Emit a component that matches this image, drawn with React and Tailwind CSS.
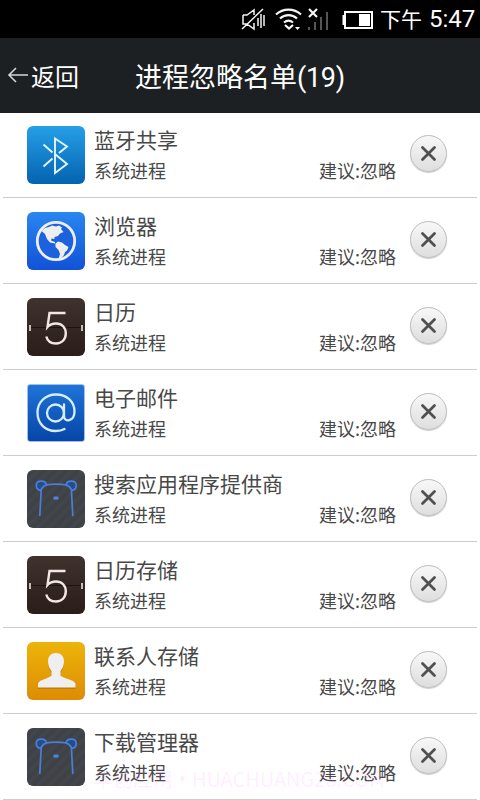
import React from 'react';

const rows = [
  ['蓝牙共享', 'bluetooth'],
  ['浏览器', 'globe'],
  ['日历', 'calendar'],
  ['电子邮件', 'mail'],
  ['搜索应用程序提供商', 'bear'],
  ['日历存储', 'calendar'],
  ['联系人存储', 'contact'],
  ['下载管理器', 'bear'],
];

const tiles = {
  bluetooth: 'rounded-[6px] bg-linear-to-b from-[#25a0e8] to-[#0563b0]',
  globe: 'rounded-[6px] bg-linear-to-b from-[#2a86f0] to-[#1451d8]',
  calendar: 'rounded-[6px] bg-linear-to-b from-[#40322d] to-[#2a1d1a]',
  mail: 'rounded-[3px] border border-[#9fc0ea] bg-linear-to-b from-[#1f74d8] to-[#0845a8]',
  bear: 'rounded-[6px] bg-[repeating-linear-gradient(135deg,#43474c_0px,#3e4247_4px,#3e4247_5px,#43474c_8px)]',
  contact: 'rounded-[6px] bg-linear-to-b from-[#ecb40a] to-[#dd8c04]',
};

const PERSON =
  'M29 11C24 11 21 14.500 21 19C21 23 22 26 24.500 29V33.500C21 37 13 37 11 41.500V45.500H48.500V41.500C46 37 37 37 33.500 33.500V29C36 26 37 23 37 19C37 14.500 34 11 29 11Z';

function Glyph({ kind }) {
  switch (kind) {
    case 'bluetooth':
      return (
        <g fill="none" stroke="#e4f5ff" strokeWidth="1.9">
          <path d="M16.5 18.5 25.5 26.5M16.5 40.5 25.5 32.5M32 27 40 20.5 28 12.5V47L40 38 28.5 28.5" />
        </g>
      );
    case 'globe':
      return (
        <>
          <circle cx="29" cy="29" r="18.7" fill="#1c62df" stroke="#eeeeee" strokeWidth="2.8" />
          <path fill="#eeeeee" d="M14.500 19 18 16 22 15 25 13.500 29 14.500 32 13.500 35 15.500 34 17 36.500 20 33 21.500 31 24 27.500 25 27.500 27 24.500 26.500 24 28.500 28 30 28 31.500 23 30.500 20 27 18 22Z" />
          <path fill="#eeeeee" d="M28.500 31.500 31 29.500 35 30.500 38 33 41.500 35 40 38.500 38 40 37 43 33.500 47 31.500 47 33 42 31.500 38 28.500 35Z" />
        </>
      );
    case 'calendar':
      return (
        <>
          <path d="M3 29.500H55" stroke="#1d1310" strokeWidth="1" />
          <path d="M3 27V33M55 27V33" stroke="#d8cdc8" strokeWidth="1.8" />
          <path d="M38.500 15H22.500L20.500 29C23 26.300 26 25.500 29 25.500C35 25.500 38.800 29.500 38.800 35.300C38.800 41.500 34.800 45.500 29 45.500C23.500 45.500 20.300 42.500 19.300 38.500" fill="none" stroke="#f1e7e4" strokeWidth="2.4" />
        </>
      );
    case 'mail':
      return (
        <g fill="none" stroke="#d6ecff" strokeWidth="2.3" strokeLinecap="round" transform="translate(-1 -1)">
          <circle cx="28.500" cy="29" r="8.500" />
          <path d="M37 20.500V32C37 39 47.500 37.500 47.500 27.500C47.500 17 39.500 10.500 29 10.500C18 10.500 10.500 18.500 10.500 28.500C10.500 39.500 18 47 28.500 47C32 47 35 46.500 37.500 45" />
        </g>
      );
    case 'bear':
      return (
        <g fill="none" stroke="#4a7fd8" strokeWidth="1.7" strokeLinecap="round">
          <path d="M12.800 45.500 14.200 20M45.800 45.500 44.400 20M18.500 15C25 13.900 33 13.900 40 15" />
          <path fill="#254d8c" d="M13.500 20.500C7.500 19 8 11 14.200 11.200C17.500 11.300 19.300 13 19.300 15.200C16.500 15.500 15.500 17.500 13.500 20.500ZM45 20.500C51 19 50.500 11 44.300 11.200C41 11.300 39.200 13 39.200 15.200C42 15.500 43 17.500 45 20.500Z" />
          <ellipse cx="29" cy="28" rx="2" ry="1" fill="#8ab4f0" />
        </g>
      );
    default:
      return (
        <>
          <path d={PERSON} fill="#a86803" opacity=".55" transform="translate(0 1.500)" />
          <path d={PERSON} fill="#efefef" />
        </>
      );
  }
}

function StatusBar() {
  return (
    <div className="flex h-[38px] items-center bg-black pl-[240px] text-white">
      <svg width="137" height="38" viewBox="240 0 137 38" className="shrink-0">
        <g fill="none" stroke="#f4f4f4" strokeWidth="1.5">
          <path d="M243 15V24H247L254 29V23M243 15H247L254 10V15M242 29 263 9M258 18V26M261 14V28M264 15V26" />
          <path strokeWidth="2.2" d="M276 14.500C283 8 294 8 301 14.500M280 18.500C285 14 292 14 297 18.500M284 22.500C287 20 290 20 293 22.500" />
          <path strokeWidth="2.2" d="M309 9 317 17M317 9 309 17" />
        </g>
        <path d="M285 25 289 28.500 293 25" fill="none" stroke="#fff" strokeWidth="2.2" />
        <path d="M295 27H300L297.500 30Z" fill="#fff" />
        <path d="M309 27V30M315 22V30M321 17V30M327 12V30" stroke="#555" strokeWidth="2" />
        <path d="M345 12H372V28H345ZM345 16H343.500V24H345" fill="none" stroke="#fff" strokeWidth="2" />
        <path d="M359 14H370V26H359Z" fill="#fff" />
      </svg>
      <span className="ml-[3px] whitespace-nowrap pb-px text-[21px] leading-[37px]">下午</span>
      <span className="ml-[7px] whitespace-nowrap font-[Roboto] text-[24px] leading-[38px]">5:47</span>
    </div>
  );
}

function Row({ title, kind }) {
  return (
    <li className="mx-[3px] flex h-[86px] shrink-0 border-b border-[#cdcdcd] pl-6">
      <div className={`mt-[14px] size-[58px] shrink-0 overflow-hidden ${tiles[kind]}`}>
        <svg width="58" height="58" viewBox="0 0 58 58">
          <Glyph kind={kind} />
        </svg>
      </div>
      <div className="ml-[9px] mt-[12px] w-[225px] whitespace-nowrap text-[#484848]">
        <div className="text-[21px] leading-[30px]">{title}</div>
        <div className="mt-px text-[18px] leading-[30px]">系统进程</div>
      </div>
      <div className="mt-[43px] w-[77px] whitespace-nowrap text-[18px] leading-[30px] text-[#484848]">建议:忽略</div>
      <button className="ml-[14px] mt-[23px] flex size-[37px] items-center justify-center rounded-full border border-[#bcbcbc] bg-linear-to-b from-[#f8f8f8] to-[#dedede] shadow-[0_1px_1px_#ccc]">
        <svg width="17" height="17" viewBox="0 0 17 17">
          <path d="M2.500 2.500 14.500 14.500M14.500 2.500 2.500 14.500" stroke="#505050" strokeWidth="2.8" strokeLinecap="round" />
        </svg>
      </button>
    </li>
  );
}

export default function App() {
  return (
    <div className="relative flex h-[800px] w-[480px] flex-col overflow-hidden bg-white font-['Noto_Sans_CJK_SC',sans-serif]">
      <StatusBar />
      <header className="flex h-[75px] shrink-0 items-center bg-[#1d2022] text-white">
        <svg width="22" height="20" viewBox="0 0 22 20" className="ml-[7px]">
          <path d="M21 9H2M9 2 2 9 9 16" fill="none" stroke="#d5d5d5" strokeWidth="1.6" />
        </svg>
        <span className="ml-[2px] w-[104px] text-[24px]">返回</span>
        <h1 className="whitespace-nowrap pt-[3px] text-[27px]">
          进程忽略名单<span className="font-[Roboto] tracking-[-0.3px]">(19)</span>
        </h1>
      </header>
      <ul className="-mt-px flex flex-col">
        {rows.map(([title, kind]) => (
          <Row key={title} title={title} kind={kind} />
        ))}
      </ul>
      <div className="absolute left-[93px] top-[764px] flex whitespace-nowrap text-[20px] leading-[30px] text-[#ff50ff]/10">
        <span className="w-[80px]">华创应用</span>
        <span className="w-[19px] text-center font-['Noto_Sans']">•</span>
        <span>HUACHUANG28.COM</span>
      </div>
    </div>
  );
}
